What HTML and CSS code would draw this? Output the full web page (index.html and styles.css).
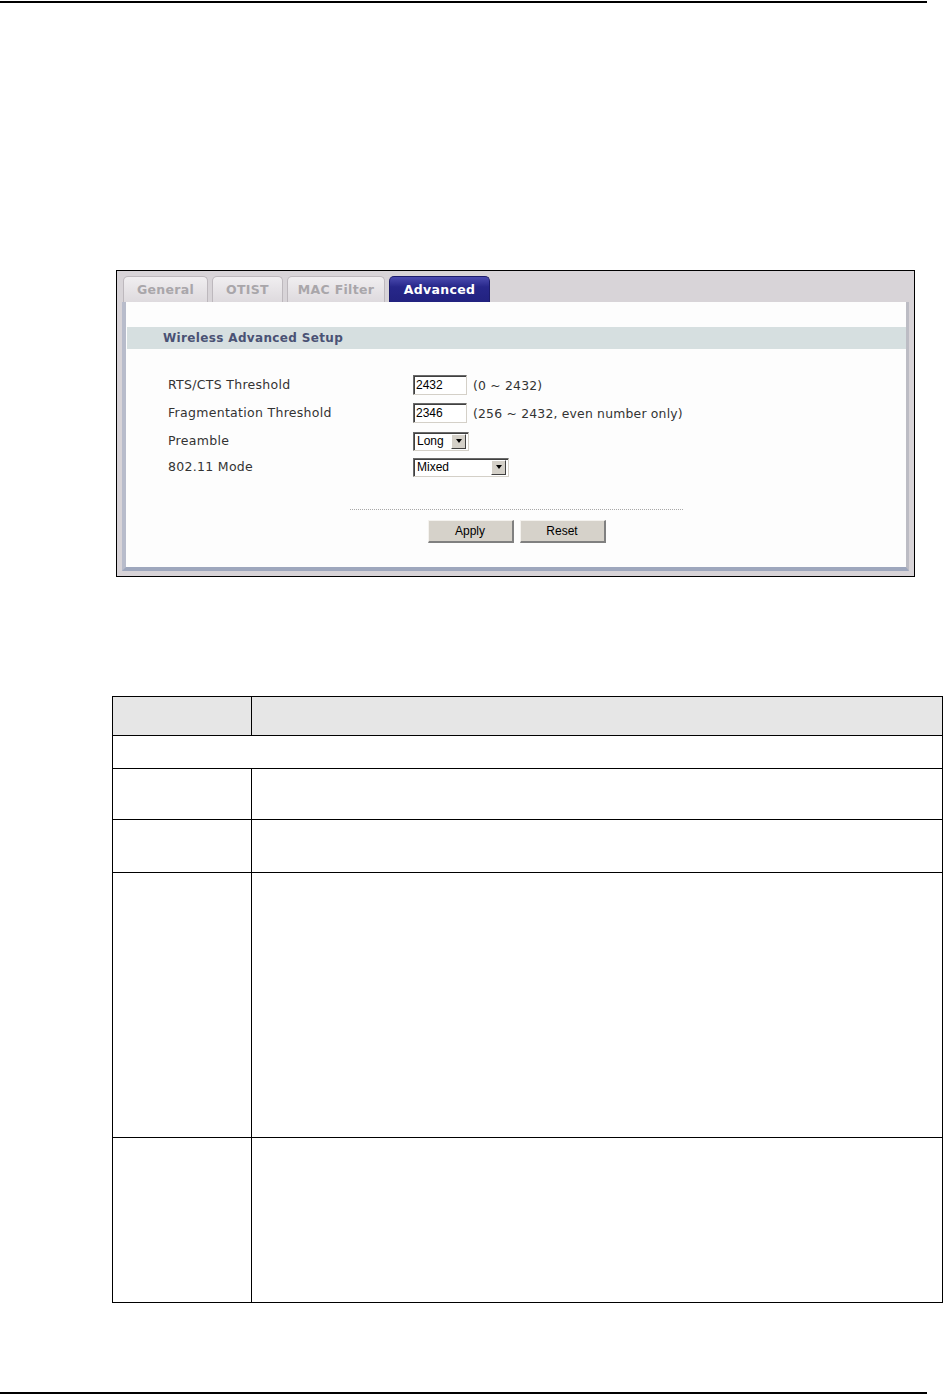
FILE: index.html
```html
<!DOCTYPE html>
<html lang="en">
<head>
  <meta charset="UTF-8">
  <title>Wireless Advanced Setup</title>
  <link rel="stylesheet" href="styles.css">
</head>
<body>
  <div class="rule rule-top"></div>

  <!-- Screenshot of the web configurator -->
  <div class="shot">
    <div class="tabs">
      <div class="tab tab-general">General</div>
      <div class="tab tab-otist">OTIST</div>
      <div class="tab tab-mac">MAC Filter</div>
      <div class="tab tab-advanced active">Advanced</div>
    </div>

    <div class="panel">
      <div class="panel-title">Wireless Advanced Setup</div>

      <div class="fields">
        <div class="label">RTS/CTS Threshold</div>
        <div class="control">
          <input type="text" class="num" value="2432">
          <span class="hint">(0 ~ 2432)</span>
        </div>

        <div class="label">Fragmentation Threshold</div>
        <div class="control">
          <input type="text" class="num" value="2346">
          <span class="hint">(256 ~ 2432, even number only)</span>
        </div>

        <div class="label">Preamble</div>
        <div class="control">
          <div class="select select-short"><span>Long</span><b class="arrow"></b></div>
        </div>

        <div class="label last">802.11 Mode</div>
        <div class="control last">
          <div class="select select-long"><span>Mixed</span><b class="arrow"></b></div>
        </div>
      </div>

      <div class="dots"></div>

      <div class="buttons">
        <button>Apply</button>
        <button>Reset</button>
      </div>
    </div>
  </div>

  <!-- Field description table -->
  <table class="desc">
    <tr class="head">
      <td class="c1"></td>
      <td></td>
    </tr>
    <tr class="r1"><td colspan="2"></td></tr>
    <tr class="r2"><td class="c1"></td><td></td></tr>
    <tr class="r3"><td class="c1"></td><td></td></tr>
    <tr class="r4"><td class="c1"></td><td></td></tr>
    <tr class="r5"><td class="c1"></td><td></td></tr>
  </table>

  <div class="rule rule-bottom"></div>
</body>
</html>
```

FILE: styles.css
```css
* {
  box-sizing: border-box;
}

body {
  margin: 0;
  background: #fff;
  font-family: "DejaVu Sans", Verdana, sans-serif;
  width: 943px;
}

.rule {
  width: 927px;
  height: 2px;
  background: #000;
}

.rule-top {
  margin-top: 1px;
}

.rule-bottom {
  margin-top: 89px;
}

/* screenshot frame */
.shot {
  margin: 267px 0 0 116px;
  width: 799px;
  height: 307px;
  border: 1px solid #000;
  background: #d8d4d8;
  display: flex;
  flex-direction: column;
}

.tabs {
  display: flex;
  gap: 4px;
  padding: 5px 0 0 6px;
  height: 31px;
}

.tab {
  height: 26px;
  border: 1px solid #bdb8bd;
  border-bottom: none;
  border-radius: 5px 5px 0 0;
  background: linear-gradient(#f0eef0, #dedade);
  color: #a9a6aa;
  font-size: 12.5px;
  font-weight: bold;
  text-align: center;
  line-height: 25px;
  letter-spacing: 0.3px;
}

.tab-general { width: 85px; }
.tab-otist { width: 71px; }
.tab-mac { width: 98px; }
.tab-advanced { width: 101px; }

.tab.active {
  background: linear-gradient(#4b4bb0, #27278a 40%, #222280);
  border-color: #1c1c6c;
  color: #fff;
}

.panel {
  flex: 1;
  margin: 0 5px 5px 5px;
  background: #fdfdfd;
  border-left: 4px solid #b8bccb;
  border-bottom: 4px solid #9ea7bd;
  border-right: 3px solid #bcbcc4;
  padding: 25px 0 0 1px;
  display: flex;
  flex-direction: column;
}

.panel-title {
  height: 22px;
  background: #d6dfe0;
  color: #4a5274;
  font-size: 12px;
  font-weight: bold;
  line-height: 22px;
  padding-left: 36px;
  letter-spacing: 0.35px;
}

.fields {
  display: grid;
  grid-template-columns: 245px auto;
  row-gap: 8px;
  margin: 26px 0 0 41px;
}

.label {
  font-size: 12.5px;
  color: #333;
  line-height: 20px;
  letter-spacing: 0.3px;
}

.label.last,
.control.last {
  margin-top: -2px;
}

.control {
  display: flex;
  align-items: center;
  gap: 6px;
  height: 20px;
}

.num {
  width: 54px;
  height: 20px;
  margin: 0;
  padding: 0 2px;
  border: 1px solid #6a6a6a;
  border-right-color: #d4d0c8;
  border-bottom-color: #d4d0c8;
  box-shadow: inset 1px 1px 0 #404040;
  font-family: "Liberation Sans", Arial, sans-serif;
  font-size: 12px;
  color: #000;
}

.hint {
  font-size: 12.4px;
  color: #333;
  letter-spacing: 0.2px;
}

.select {
  height: 19px;
  display: flex;
  align-items: center;
  justify-content: space-between;
  border: 1px solid #6a6a6a;
  border-right-color: #d4d0c8;
  border-bottom-color: #d4d0c8;
  box-shadow: inset 1px 1px 0 #404040;
  padding: 0 2px 0 3px;
  background: #fff;
  font-family: "Liberation Sans", Arial, sans-serif;
  font-size: 12px;
}

.select-short { width: 56px; }
.select-long { width: 96px; }

.arrow {
  width: 15px;
  height: 15px;
  background: #d4d0c8;
  border: 1px solid #fff;
  border-right-color: #404040;
  border-bottom-color: #404040;
  display: flex;
  align-items: center;
  justify-content: center;
}

.arrow::after {
  content: "";
  border-left: 3.5px solid transparent;
  border-right: 3.5px solid transparent;
  border-top: 4px solid #000;
}

.dots {
  align-self: center;
  width: 333px;
  margin-top: 32px;
  border-top: 1px dotted #a8a8a8;
}

.buttons {
  display: flex;
  justify-content: center;
  gap: 6px;
  margin-top: 10px;
}

button {
  width: 86px;
  height: 23px;
  background: #d6d2ca;
  border: 1px solid #f4f2ee;
  border-right: 2px solid #808080;
  border-bottom: 2px solid #808080;
  font-family: "Liberation Sans", Arial, sans-serif;
  font-size: 12px;
  color: #000;
  padding: 0;
}

/* description table */
.desc {
  margin: 119px 0 0 112px;
  width: 831px;
  border-collapse: collapse;
}

.desc td {
  border: 1px solid #000;
  padding: 0;
}

.desc .c1 {
  width: 139px;
}

.desc .head td {
  background: #e6e6e6;
  height: 39px;
}

.desc .r1 td { height: 33px; }
.desc .r2 td { height: 51px; }
.desc .r3 td { height: 53px; }
.desc .r4 td { height: 265px; }
.desc .r5 td { height: 165px; }
```
